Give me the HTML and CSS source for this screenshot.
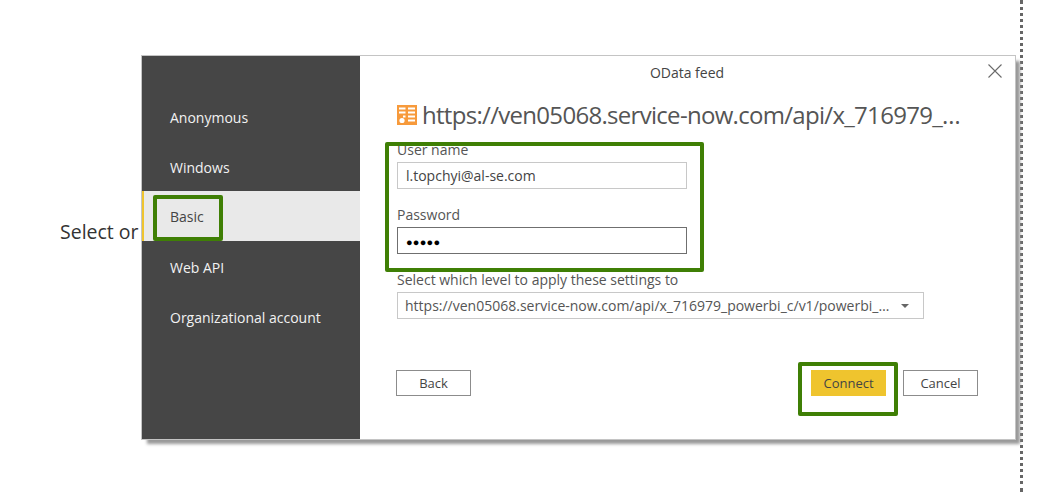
FILE: index.html
```html
<!DOCTYPE html>
<html lang="en">
<head>
<meta charset="utf-8">
<title>OData feed</title>
<link rel="stylesheet" href="styles.css">
</head>
<body>
<div class="stage">
  <p class="behind">Select or</p>
  <div class="dotted"></div>
  <section class="dialog">
    <nav class="side">
      <div class="item">Anonymous</div>
      <div class="item">Windows</div>
      <div class="item active">Basic</div>
      <div class="item">Web API</div>
      <div class="item">Organizational account</div>
    </nav>
    <main class="main">
      <h2 class="title">OData feed</h2>
      <svg class="close" width="14" height="14" viewBox="0 0 14 14"><path d="M0.5 0.5L13.5 13.5M13.5 0.5L0.5 13.5" stroke="#6a6a6a" stroke-width="1.1" fill="none"/></svg>
      <div class="url">
        <svg class="feed" width="20" height="20" viewBox="0 0 20 20"><rect width="20" height="20" fill="#f79a3b"/><path d="M2 3.5h6.5M11 3.5h7M2 7.5h6.5M11 7.5h7M6 11.5h2.5M11 11.5h7M11 15.5h7" stroke="#fff" stroke-width="2" fill="none"/><circle cx="5" cy="15.5" r="2.6" fill="#fff"/></svg>
        <span class="url-text">https://ven05068.service-now.com/api/x_716979_powerbi_c/v1/powerbi_data</span>
      </div>
      <label class="lbl">User name</label>
      <div class="field">l.topchyi@al-se.com</div>
      <label class="lbl second">Password</label>
      <div class="field focus"><span class="dots">●●●●●</span></div>
      <label class="lbl third">Select which level to apply these settings to</label>
      <div class="select">
        <span class="select-text">https://ven05068.service-now.com/api/x_716979_powerbi_c/v1/powerbi_data</span>
        <svg class="caret" width="8" height="4" viewBox="0 0 8 4"><path d="M0 0H8L4 4Z" fill="#666"/></svg>
      </div>
      <div class="actions">
        <button class="btn">Back</button>
        <div class="spacer"></div>
        <button class="btn primary">Connect</button>
        <button class="btn">Cancel</button>
      </div>
    </main>
    <div class="mark mark-basic"></div>
    <div class="mark mark-form"></div>
    <div class="mark mark-connect"></div>
  </section>
</div>
</body>
</html>
```
FILE: styles.css
```css
* { box-sizing: border-box; }
html, body { margin: 0; padding: 0; background: #fff; }
body { font-family: "Open Sans", "Noto Sans", sans-serif; color: #3a3a3a; }
.stage { position: relative; width: 1044px; height: 492px; overflow: hidden; }
.behind { position: absolute; left: 60px; top: 219px; margin: 0; font-size: 19.5px; line-height: 26px; color: #333; }
.dotted { position: absolute; left: 1020px; top: 0; bottom: 0; border-left: 3px dotted #666; }
.dialog { position: absolute; left: 141px; top: 55px; width: 875px; height: 385px; display: flex; background: #fff; border: 1px solid #c4c4c4; box-shadow: 5px 5px 3px -1px #999; }
.side { width: 218px; flex: none; background: #464646; padding-top: 36px; }
.item { height: 50px; display: flex; align-items: center; padding-left: 28px; font-size: 14px; color: #f2f2f2; }
.item.active { height: 50px; margin-top: -1px; margin-bottom: 1px; background: #e9e9e9; color: #444; border-left: 2px solid #efc42e; padding-left: 26px; }
.main { flex: 1; display: flex; flex-direction: column; align-items: flex-start; padding: 0 38px 0 37px; min-width: 0; position: relative; }
.title { align-self: center; margin: 7px 0 0; font-size: 14px; line-height: 20px; font-weight: 400; color: #444; }
.close { position: absolute; right: 13px; top: 8px; }
.url { display: flex; align-items: center; gap: 5px; margin-top: 14px; width: 570px; height: 36px; }
.feed { flex: none; }
.url-text { font-size: 24px; line-height: 36px; letter-spacing: -0.7px; color: #555; white-space: nowrap; overflow: hidden; text-overflow: ellipsis; }
.lbl { font-size: 14px; line-height: 20px; color: #555; margin-top: 7px; }
.lbl.second { margin-top: 16px; }
.lbl.third { margin-top: 16px; }
.field { width: 290px; height: 27px; margin-top: 2px; border: 1px solid #c8c8c8; padding-left: 8px; font-size: 14px; line-height: 25px; color: #444; }
.field.focus { border-color: #6f6f6f; }
.dots { font-size: 11px; letter-spacing: 0.2px; color: #000; }
.select { width: 527px; height: 27px; margin-top: 2px; border: 1px solid #c8c8c8; padding: 0 14px 0 7px; display: flex; align-items: center; gap: 10px; }
.select-text { flex: 1; min-width: 0; font-size: 14px; color: #555; white-space: nowrap; overflow: hidden; text-overflow: ellipsis; }
.caret { flex: none; }
.actions { display: flex; align-items: flex-start; width: 582px; margin: 51px 0 0 -1px; }
.spacer { flex: 1; }
.btn { width: 75px; height: 26px; margin: 0; padding: 0; background: #fff; border: 1px solid #8c8c8c; font: 13px "Open Sans", "Noto Sans", sans-serif; color: #444; }
.btn.primary { background: #efc42e; border-color: #efc42e; margin-right: 17px; color: #444; }
.mark { position: absolute; border: 4px solid #3f7f05; border-radius: 2px; pointer-events: none; }
.mark-basic { left: 11px; top: 139px; width: 70px; height: 46px; }
.mark-form { left: 243px; top: 86px; width: 319px; height: 130px; }
.mark-connect { left: 656px; top: 306px; width: 100px; height: 54px; }
```
